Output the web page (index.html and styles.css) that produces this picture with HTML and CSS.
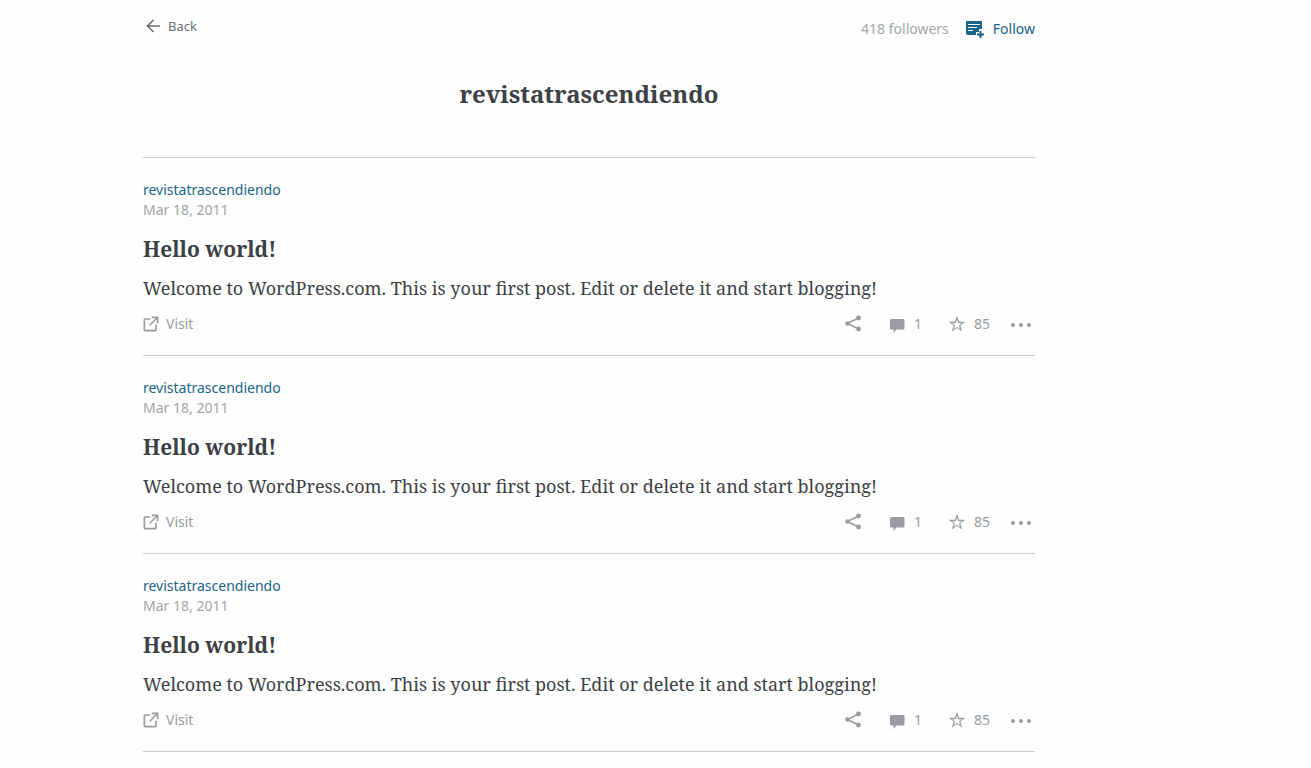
FILE: index.html
```
<!DOCTYPE html>
<html lang="en">
<head>
<meta charset="utf-8">
<meta name="viewport" content="width=device-width, initial-scale=1">
<title>revistatrascendiendo</title>
<link rel="stylesheet" href="styles.css">
</head>
<body>
<svg class="symbols" aria-hidden="true">
  <symbol id="external" viewBox="0 0 24 24"><path d="M19 13v6c0 1.100-.9 2-2 2H5c-1.100 0-2-.9-2-2V7c0-1.100.9-2 2-2h6v2H5v12h12v-6h2zM13 3v2h4.600l-7.800 7.800 1.400 1.400L19 6.400V11h2V3h-8z"/></symbol>
  <symbol id="share" viewBox="0 0 18 18"><path d="M14.500 3 3.500 8.500l11 5.500" fill="none" stroke="currentColor" stroke-width="1.600"/><circle cx="14.500" cy="3" r="2.400"/><circle cx="3.500" cy="8.500" r="2.200"/><circle cx="14.500" cy="14" r="2.400"/></symbol>
  <symbol id="comment" viewBox="0 0 18 18"><path d="M3.500 4h11.500c1 0 1.500.6 1.500 1.500v7.500c0 1-.5 1.500-1.500 1.500H8.500L5.500 18v-3.500h-2c-1 0-1.500-.5-1.500-1.500V5.500C2 4.600 2.500 4 3.500 4z"/></symbol>
  <symbol id="star" viewBox="0 0 24 24"><path d="M12 6.300l1.200 3.500.5 1.300h4.800l-2.700 2-1.100.8.4 1.400 1 3.300-3-2.100-1.100-.8-1.200.8-2.900 2.100 1-3.300.4-1.400-1.200-.8-2.600-2h4.800l.5-1.300L12 6.300M12 1 9.200 9H1l6.500 5-2.300 8L12 17.200 18.800 22l-2.300-8L23 9h-8.200L12 1z"/></symbol>
  <symbol id="dots" viewBox="0 0 22 18"><circle cx="3" cy="10" r="2"/><circle cx="11" cy="10" r="2"/><circle cx="19" cy="10" r="2"/></symbol>
</svg>
<main class="stream">
  <header class="topbar">
    <button class="back" type="button"><svg class="icon-back" viewBox="0 0 16 16" aria-hidden="true"><path d="M15 8H2.500M8.500 2l-6 6 6 6"/></svg>Back</button>
    <div class="follow-area">
      <span class="followers">418 followers</span>
      <button class="follow" type="button"><svg class="icon-follow" viewBox="0 0 20 20" aria-hidden="true"><path d="M2 2h14c.6 0 1 .4 1 1v7h-3v3h-3v3H3c-1.200 0-2-.8-2-2V3c0-.6.4-1 1-1z"/><path class="lines" d="M3 5.500h12M3 8.500h9M3 11.500h5"/><path class="plus" d="M15.500 12v7M12 15.500h7"/></svg>Follow</button>
    </div>
  </header>
  <h1 class="feed-title">revistatrascendiendo</h1>

  <article class="post">
    <a class="site" href="#">revistatrascendiendo</a>
    <time class="date" datetime="2011-03-18">Mar 18, 2011</time>
    <h2 class="title">Hello world!</h2>
    <p class="excerpt">Welcome to WordPress.com. This is your first post. Edit or delete it and start blogging!</p>
    <footer class="actions">
      <a class="visit" href="#"><svg class="icon-external" aria-hidden="true"><use href="#external"/></svg>Visit</a>
      <button class="action share" type="button" aria-label="Share"><svg class="icon" aria-hidden="true"><use href="#share"/></svg></button>
      <button class="action comments" type="button" aria-label="1 comment"><svg class="icon" aria-hidden="true"><use href="#comment"/></svg>1</button>
      <button class="action likes" type="button" aria-label="85 likes"><svg class="icon" aria-hidden="true"><use href="#star"/></svg>85</button>
      <button class="action more" type="button" aria-label="More"><svg class="icon-dots" aria-hidden="true"><use href="#dots"/></svg></button>
    </footer>
  </article>

  <article class="post">
    <a class="site" href="#">revistatrascendiendo</a>
    <time class="date" datetime="2011-03-18">Mar 18, 2011</time>
    <h2 class="title">Hello world!</h2>
    <p class="excerpt">Welcome to WordPress.com. This is your first post. Edit or delete it and start blogging!</p>
    <footer class="actions">
      <a class="visit" href="#"><svg class="icon-external" aria-hidden="true"><use href="#external"/></svg>Visit</a>
      <button class="action share" type="button" aria-label="Share"><svg class="icon" aria-hidden="true"><use href="#share"/></svg></button>
      <button class="action comments" type="button" aria-label="1 comment"><svg class="icon" aria-hidden="true"><use href="#comment"/></svg>1</button>
      <button class="action likes" type="button" aria-label="85 likes"><svg class="icon" aria-hidden="true"><use href="#star"/></svg>85</button>
      <button class="action more" type="button" aria-label="More"><svg class="icon-dots" aria-hidden="true"><use href="#dots"/></svg></button>
    </footer>
  </article>

  <article class="post">
    <a class="site" href="#">revistatrascendiendo</a>
    <time class="date" datetime="2011-03-18">Mar 18, 2011</time>
    <h2 class="title">Hello world!</h2>
    <p class="excerpt">Welcome to WordPress.com. This is your first post. Edit or delete it and start blogging!</p>
    <footer class="actions">
      <a class="visit" href="#"><svg class="icon-external" aria-hidden="true"><use href="#external"/></svg>Visit</a>
      <button class="action share" type="button" aria-label="Share"><svg class="icon" aria-hidden="true"><use href="#share"/></svg></button>
      <button class="action comments" type="button" aria-label="1 comment"><svg class="icon" aria-hidden="true"><use href="#comment"/></svg>1</button>
      <button class="action likes" type="button" aria-label="85 likes"><svg class="icon" aria-hidden="true"><use href="#star"/></svg>85</button>
      <button class="action more" type="button" aria-label="More"><svg class="icon-dots" aria-hidden="true"><use href="#dots"/></svg></button>
    </footer>
  </article>
</main>
</body>
</html>
```
FILE: styles.css
```
* { box-sizing: border-box; }
body {
  margin: 0;
  background: #fefefe;
  color: #3d4145;
  font-family: "Noto Sans", sans-serif;
  font-size: 14px;
  line-height: 20px;
}
button {
  display: flex;
  align-items: center;
  padding: 0;
  border: 0;
  background: none;
  color: inherit;
  font: inherit;
}
a { text-decoration: none; }
svg { flex: none; fill: currentColor; }
.symbols { display: none; }
.stream { padding: 16px 276px 0 143px; }
.topbar {
  display: flex;
  justify-content: space-between;
  align-items: flex-start;
}
.back { gap: 7px; color: #6b7075; font-size: 13px; padding-left: 2px; }
.icon-back {
  width: 16px;
  height: 16px;
  fill: none;
  stroke: currentColor;
  stroke-width: 1.6;
}
.follow-area { display: flex; gap: 16px; padding-top: 3px; }
.followers { color: #a3a5a8; }
.follow { gap: 8px; color: #1a6487; }
.icon-follow { width: 20px; height: 20px; }
.lines { fill: none; stroke: #fefefe; stroke-width: 1; }
.plus { fill: none; stroke: currentColor; stroke-width: 2; }
.feed-title, .title, .excerpt {
  margin: 0;
  font-family: "Noto Serif", "DejaVu Serif Condensed", "DejaVu Serif", serif;
}
.feed-title {
  padding: 37px 0 45px;
  border-bottom: 1px solid #c9cbcd;
  font-size: 24px;
  line-height: 36px;
  text-align: center;
}
.post {
  display: flex;
  flex-direction: column;
  align-items: flex-start;
  padding: 22px 0 19px;
  border-bottom: 1px solid #c9cbcd;
}
.site { color: #1a6487; }
.date { color: #a3a5a8; }
.title { margin-top: 14px; font-size: 21px; line-height: 30px; }
.excerpt { margin-top: 10px; font-size: 18px; line-height: 28px; }
.actions {
  display: flex;
  align-items: center;
  align-self: stretch;
  margin-top: 10px;
  min-height: 24px;
  color: #999ca0;
}
.visit {
  display: flex;
  align-items: center;
  gap: 5px;
  margin-right: auto;
  color: inherit;
}
.icon-external { width: 20px; height: 20px; margin-left: -2px; }
.action { gap: 8px; }
.icon { width: 18px; height: 18px; }
.comments, .likes { margin-left: 26px; }
.more { margin-left: 20px; margin-right: 3px; }
.icon-dots { width: 22px; height: 18px; }
```
